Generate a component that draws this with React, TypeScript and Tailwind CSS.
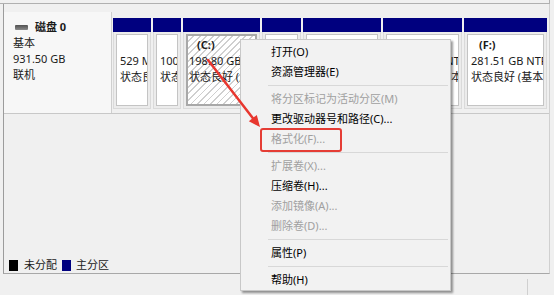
import React from "react";

type Part = {
  w: string;
  label?: string;
  size: string;
  status: string;
  selected?: boolean;
};

const parts: Part[] = [
  { w: "w-[38px]", size: "529 MB", status: "状态良好 (恢复分区)" },
  { w: "w-[28px]", size: "100 MB", status: "状态良好 (EFI 系统分区)" },
  { w: "w-[77px]", label: "(C:)", size: "198.80 GB NTFS", status: "状态良好 (启动, 页面文件)", selected: true },
  { w: "w-[39px]", size: "", status: "" },
  { w: "w-[78px]", size: "", status: "" },
  { w: "w-[79px]", label: "", size: "200.00 GB NTFS", status: "状态良好 (基本数据分区)" },
  { w: "w-[83px]", label: "(F:)", size: "281.51 GB NTFS", status: "状态良好 (基本数据分区)" },
];

type Item = { t: "item"; text: string; enabled: boolean; box?: boolean } | { t: "sep" };

const menu: Item[] = [
  { t: "item", text: "打开(O)", enabled: true },
  { t: "item", text: "资源管理器(E)", enabled: true },
  { t: "sep" },
  { t: "item", text: "将分区标记为活动分区(M)", enabled: false },
  { t: "item", text: "更改驱动器号和路径(C)...", enabled: true },
  { t: "item", text: "格式化(F)...", enabled: false, box: true },
  { t: "sep" },
  { t: "item", text: "扩展卷(X)...", enabled: false },
  { t: "item", text: "压缩卷(H)...", enabled: true },
  { t: "item", text: "添加镜像(A)...", enabled: false },
  { t: "item", text: "删除卷(D)...", enabled: false },
  { t: "sep" },
  { t: "item", text: "属性(P)", enabled: true },
  { t: "sep" },
  { t: "item", text: "帮助(H)", enabled: true },
];

function Partition({ p }: { p: Part }) {
  return (
    <div className={`${p.w} flex flex-col shrink-0`}>
      <div className="h-[14px] bg-[#00007f]" />
      <div className="flex-1 p-[2px] bg-[#ececec] border border-t-0 border-[#dadada]">
        <div
          className={
            p.selected
              ? "h-full border-2 border-[#a8a8a8] bg-[repeating-linear-gradient(135deg,#ffffff_0px,#ffffff_3.5px,#cfcfcf_3.5px,#cfcfcf_4.6px)] overflow-hidden pt-[1px] pl-[1px]"
              : "h-full border border-[#c4c4c4] bg-white overflow-hidden pt-[2px] pl-[3px]"
          }
        >
          <div className="leading-[16px] whitespace-nowrap text-[#1a1a1a]">
            <div className="pl-[8px] font-bold h-[16px]">{p.label ?? ""}</div>
            <div className="h-[16px]">{p.size}</div>
            <div className="h-[16px]">{p.status}</div>
          </div>
        </div>
      </div>
    </div>
  );
}

export default function App() {
  return (
    <div className="w-[554px] h-[295px] bg-[#f0f0f0] relative overflow-hidden text-[11px] font-['Noto_Sans','Noto_Sans_CJK_SC',sans-serif] text-black">
      {/* previous row bottom */}
      <div className="h-[4px] w-[550px] border-b border-r border-[#b0b0b0]" />

      {/* disk frame */}
      <div className="ml-[3px] w-[547px] h-[270px] border-l border-b border-r border-l-[#9c9c9c] border-b-[#a8a8a8] border-r-[#d0d0d0] flex flex-col">
        <div className="h-[8px]" />
        <div className="flex h-[102px] border-b border-[#c8c8c8]">
          <div className="w-[108px] shrink-0 bg-[#f7f7f7] border-r border-[#cfcfcf] pl-[9px] pt-[7px] leading-[16px] text-[#1a1a1a]">
            <div className="flex items-center">
              <div className="w-[13px] h-[5px] mr-[7px] ml-[2px] rounded-[1px] bg-[linear-gradient(#505050,#8a8a8a)]" />
              <span className="font-bold">磁盘 0</span>
            </div>
            <div>基本</div>
            <div>931.50 GB</div>
            <div>联机</div>
          </div>
          <div className="flex gap-[2px] pl-[1px] pt-[6px] pb-[4px]">
            {parts.map((p, i) => (
              <Partition key={i} p={p} />
            ))}
          </div>
        </div>
        <div className="flex-1" />
        <div className="flex items-center pl-[5px] pb-[2px] h-[14px] text-[#1a1a1a]">
          <div className="w-[9px] h-[11px] bg-black" />
          <span className="ml-[6px]">未分配</span>
          <div className="w-[9px] h-[11px] bg-[#00007f] ml-[5px]" />
          <span className="ml-[5px]">主分区</span>
        </div>
      </div>

      {/* bottom strip */}
      <div className="flex h-[21px] pt-[5px]">
        <div className="w-[527px]" />
        <div className="flex-1 border-l border-[#d0d0d0]" />
      </div>

      {/* context menu */}
      <div className="absolute left-[240px] top-[39px] w-[211px] h-[252px] bg-[#f2f2f2] border border-[#c8c8c8] shadow-[2px_2px_2px_rgba(0,0,0,0.4)] pt-[2px]">
        {menu.map((m, i) =>
          m.t === "sep" ? (
            <div key={i} className="h-[7px] flex items-center pl-[27px] pr-[2px]">
              <div className="w-full h-[1px] bg-[#d8d8d8]" />
            </div>
          ) : (
            <div
              key={i}
              className={`relative h-[20px] flex items-center pl-[30px] whitespace-nowrap ${
                m.enabled ? "text-black" : "text-[#a0a0a0]"
              }`}
            >
              {m.text}
              {m.box && (
                <div className="absolute left-[19px] top-[-1px] w-[82px] h-[24px] border-2 border-[#e53d35] rounded-[3px]" />
              )}
            </div>
          )
        )}
      </div>

      {/* red arrow annotation */}
      <svg className="absolute left-0 top-0 pointer-events-none" width="554" height="295">
        <line x1="208" y1="60" x2="253.5" y2="119" stroke="#e8372f" strokeWidth="2.5" strokeLinecap="round" />
        <polygon points="260,127 248.8,121.2 256.8,115" fill="#e8372f" />
      </svg>
    </div>
  );
}
